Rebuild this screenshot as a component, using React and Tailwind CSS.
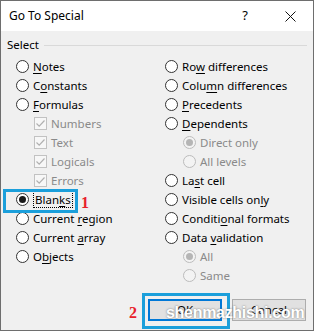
import React from 'react';

const Label = ({ text, u }) => {
  if (u === undefined) return <span>{text}</span>;
  return (
    <span>
      {text.slice(0, u)}
      <span className="underline underline-offset-2">{text[u]}</span>
      {text.slice(u + 1)}
    </span>
  );
};

const Radio = ({ checked, disabled }) => (
  <span
    className={`w-[13px] h-[13px] rounded-full border flex items-center justify-center shrink-0 ${
      disabled ? 'border-[#bcbcbc] bg-[#f3f3f3]' : 'border-[#333333] bg-white'
    }`}
  >
    {checked && (
      <span className={`w-[7px] h-[7px] rounded-full ${disabled ? 'bg-[#b5b5b5]' : 'bg-[#1a1a1a]'}`} />
    )}
  </span>
);

const Check = () => (
  <span className="w-[13px] h-[13px] border border-[#c2c2c2] bg-[#f7f7f7] flex items-center justify-center shrink-0">
    <svg width="11" height="11" viewBox="0 0 11 11">
      <path d="M1.5 5.5 L4.2 8.2 L9.5 2.5" fill="none" stroke="#b0b0b0" strokeWidth="1.2" />
    </svg>
  </span>
);

const Row = ({ text, u, sub, kind = 'radio', checked, focus }) => (
  <div className={`h-[19px] flex items-center gap-[4px] ${sub ? 'pl-[18px] text-[#8a8a8a]' : 'text-black'}`}>
    {kind === 'check' ? <Check /> : <Radio checked={checked} disabled={sub} />}
    <span className={focus ? 'border border-dotted border-black px-[1px] leading-[15px]' : ''}>
      <Label text={text} u={u} />
    </span>
  </div>
);

export default function App() {
  return (
    <div
      className="relative w-[314px] h-[331px] border border-[#6e6e6e] bg-[#f0f0f0] overflow-hidden text-[11.5px]"
      style={{ fontFamily: '"Noto Sans", "Liberation Sans", sans-serif' }}
    >
      <div className="h-[30px] bg-white flex items-center pl-[8px] text-[12px] text-black">
        <span>Go To Special</span>
        <span className="ml-auto mr-[37px] text-[13px]">?</span>
        <svg width="11" height="11" viewBox="0 0 11 11" className="mr-[17px]">
          <path d="M0.5 0.5 L10.5 10.5 M10.5 0.5 L0.5 10.5" stroke="#111" strokeWidth="1" />
        </svg>
      </div>

      <div className="mt-[5px] h-[18px] flex items-center pl-[6px] pr-[6px]">
        <span>Select</span>
        <span className="flex-1 h-px bg-[#d9d9d9] ml-[5px]" />
      </div>

      <div className="mt-[3px] grid grid-cols-[149px_1fr] pl-[15px]">
        <div className="flex flex-col">
          <Row text="Notes" u={0} />
          <Row text="Constants" u={1} />
          <Row text="Formulas" u={0} />
          <Row text="Numbers" sub kind="check" />
          <Row text="Text" sub kind="check" />
          <Row text="Logicals" sub kind="check" />
          <Row text="Errors" sub kind="check" />
          <Row text="Blanks" u={4} checked focus />
          <Row text="Current region" u={8} />
          <Row text="Current array" u={8} />
          <Row text="Objects" u={1} />
        </div>
        <div className="flex flex-col">
          <Row text="Row differences" u={2} />
          <Row text="Column differences" u={4} />
          <Row text="Precedents" u={0} />
          <Row text="Dependents" u={0} />
          <Row text="Direct only" sub checked />
          <Row text="All levels" sub />
          <Row text="Last cell" u={2} />
          <Row text="Visible cells only" u={16} />
          <Row text="Conditional formats" u={7} />
          <Row text="Data validation" u={5} />
          <Row text="All" sub checked />
          <Row text="Same" sub />
        </div>
      </div>

      <div className="mt-[14px] flex justify-end gap-[10px] pr-[7px]">
        <button className="w-[74px] h-[22px] border-2 border-[#0078d7] bg-[#e1e1e1] text-black">OK</button>
        <button className="w-[74px] h-[22px] border border-[#adadad] bg-[#e1e1e1] text-black">Cancel</button>
      </div>

      <div className="absolute left-[2px] top-[188px] w-[75px] h-[24px] border-[3px] border-[#1b9fdb]" />
      <span
        className="absolute left-[80px] top-[190px] text-[16px] font-bold text-[#e8212b]"
        style={{ fontFamily: '"Liberation Serif", serif' }}
      >
        1
      </span>
      <div className="absolute left-[141px] top-[292px] w-[88px] h-[36px] border-[3px] border-[#1b9fdb]" />
      <span
        className="absolute left-[128px] top-[300px] text-[16px] font-bold text-[#e8212b]"
        style={{ fontFamily: '"Liberation Serif", serif' }}
      >
        2
      </span>
      <span
        className="absolute left-[165px] top-[302px] text-[16px] leading-[20px] font-bold tracking-[-0.3px] text-white [text-shadow:0_0_2px_#6a6a6a]"
        style={{ fontFamily: '"Liberation Sans", sans-serif' }}
      >
        shenmazhishi.com
      </span>
    </div>
  );
}
